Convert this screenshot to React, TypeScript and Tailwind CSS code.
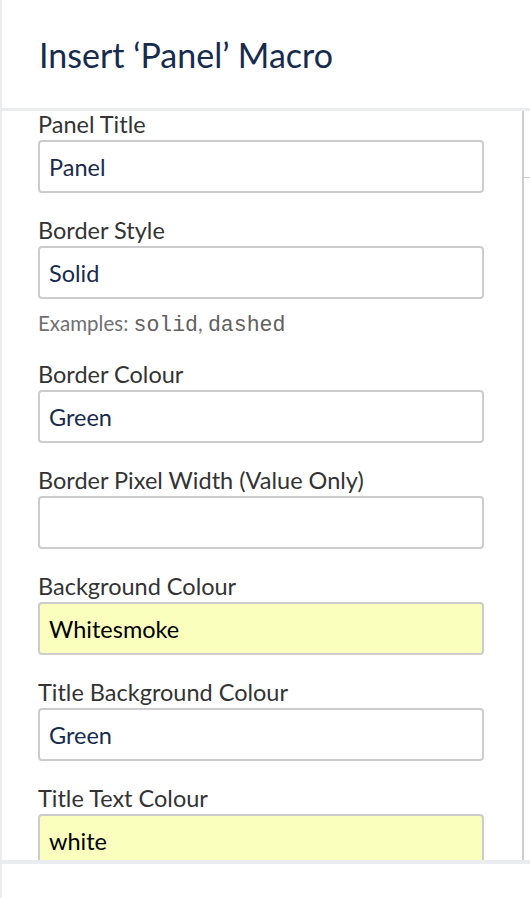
import React from "react";

type FieldProps = {
  label: string;
  value: string;
  autofill?: boolean;
  children?: React.ReactNode;
};

function Field({ label, value, autofill, children }: FieldProps) {
  return (
    <div className="mb-[24px]">
      <label className="block text-[23.5px] leading-[26px] text-[#333333]">
        {label}
      </label>
      <input
        readOnly
        defaultValue={value}
        className={
          "mt-[3px] block h-[53px] w-[446px] rounded-[4px] border-2 border-[#cccccc] px-[9px] text-[23.5px] outline-none " +
          (autofill ? "bg-[#faffbd] text-black" : "bg-white text-[#172b4d]")
        }
      />
      {children}
    </div>
  );
}

export default function App() {
  return (
    <div className="flex h-[898px] w-[530px] flex-col overflow-hidden bg-[#ebecf0] pl-[2px] font-['Lato',sans-serif]">
      <header className="flex h-[108px] shrink-0 items-center bg-white pl-[37px]">
        <h1 className="text-[34px] text-[#172b4d]">Insert ‘Panel’ Macro</h1>
      </header>

      <div className="mt-[3px] flex h-[749px] shrink-0 overflow-hidden bg-white">
        <div className="flex-1 pl-[36px]">
          <Field label="Panel Title" value="Panel" />
          <Field label="Border Style" value="Solid">
            <p className="box-content h-[20px] pt-[14px] pb-[4px] text-[20.5px] leading-[20px] text-[#707070]">
              Examples:{" "}
              <code className="font-['Liberation_Mono',monospace] text-[21.5px] text-[#606060]">
                solid
              </code>
              ,{" "}
              <code className="font-['Liberation_Mono',monospace] text-[21.5px] text-[#606060]">
                dashed
              </code>
            </p>
          </Field>
          <Field label="Border Colour" value="Green" />
          <Field label="Border Pixel Width (Value Only)" value="" />
          <Field label="Background Colour" value="Whitesmoke" autofill />
          <Field label="Title Background Colour" value="Green" />
          <Field label="Title Text Colour" value="white" autofill />
        </div>
        <div className="w-[8px] shrink-0 border-l-2 border-[#cccccc] pt-[66px]">
          <div className="h-px bg-[#cccccc]" />
        </div>
      </div>

      <footer className="mt-[4px] flex-1 bg-white" />
    </div>
  );
}
